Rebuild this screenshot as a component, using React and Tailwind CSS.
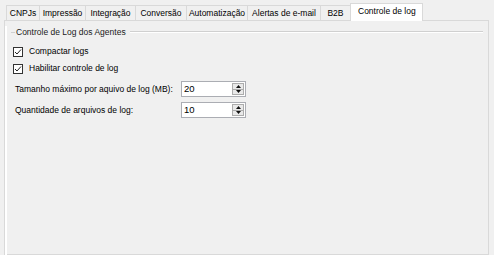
import { useState } from "react";

const tabs = [
  { label: "CNPJs", w: 34 },
  { label: "Impressão", w: 47 },
  { label: "Integração", w: 51 },
  { label: "Conversão", w: 52 },
  { label: "Automatização", w: 62 },
  { label: "Alertas de e-mail", w: 74 },
  { label: "B2B", w: 31 },
  { label: "Controle de log", w: 71 },
];

function CheckBox({ checked, label }) {
  return (
    <div className="flex items-center h-[17px]">
      <span className="w-[10px] h-[10px] border border-[#333333] bg-white flex items-center justify-center">
        {checked && (
          <svg width="8" height="8" viewBox="0 0 8 8">
            <path d="M1 4 L3 6 L7 1.5" fill="none" stroke="#222" strokeWidth="1" />
          </svg>
        )}
      </span>
      <span className="ml-[6px]">{label}</span>
    </div>
  );
}

function NumericUpDown({ value }) {
  return (
    <div className="w-[65px] h-[16px] border border-[#abadb3] bg-white flex">
      <span className="flex-1 pl-[2px] leading-[14px] text-[9.5px]">{value}</span>
      <div className="w-[12px] flex flex-col my-[1px] mr-[1px]">
        <span className="flex-1 border border-[#acacac] bg-[#e9e9e9] flex items-center justify-center">
          <svg width="5" height="3" viewBox="0 0 5 3"><path d="M2.5 0 L5 3 L0 3 Z" fill="#111" /></svg>
        </span>
        <span className="flex-1 border border-t-0 border-[#acacac] bg-[#e9e9e9] flex items-center justify-center">
          <svg width="5" height="3" viewBox="0 0 5 3"><path d="M0 0 L5 0 L2.5 3 Z" fill="#111" /></svg>
        </span>
      </div>
    </div>
  );
}

export default function App() {
  const [active] = useState(7);

  return (
    <div
      className="w-[494px] h-[255px] bg-[#f0f0f0] text-[8.5px] text-black flex flex-col overflow-hidden"
      style={{ fontFamily: '"Liberation Sans", Arial, sans-serif' }}
    >
      <div className="flex items-end h-[20px] pl-[6px] relative z-10">
        {tabs.map((t, i) =>
          i === active ? (
            <div
              key={t.label}
              style={{ width: t.w + 2 }}
              className="h-[18px] -mb-px bg-white border border-b-0 border-[#d9d9d9] pl-[7px] leading-[15px] -ml-px"
            >
              {t.label}
            </div>
          ) : (
            <div
              key={t.label}
              style={{ width: t.w }}
              className={`h-[15px] bg-[#f0f0f0] border border-b-0 border-[#d9d9d9] text-center leading-[14px] ${i > 0 ? "-ml-px" : ""}`}
            >
              {t.label}
            </div>
          )
        )}
      </div>

      <div className="ml-[4px] w-[485px] flex-1 border border-[#d9d9d9] bg-[#f0f0f0]">
        <div className="h-full border-l-2 border-white">
          <div className="ml-[4px] mr-[5px] mt-[5px] flex items-center h-[12px]">
            <span className="w-[4px] h-px bg-[#d0d0d0]" />
            <span className="ml-[1px] text-[#1a1a1a]">Controle de Log dos Agentes</span>
            <span className="flex-1 ml-[4px] h-[2px] border-t border-[#d0d0d0] border-b border-b-white" />
          </div>

          <div className="ml-[6px] mt-[5px]">
            <CheckBox checked label="Compactar logs" />
            <CheckBox checked label="Habilitar controle de log" />
          </div>

          <div className="ml-[8px] mt-[4px] flex flex-col gap-[5px]">
            <div className="flex items-center">
              <span className="w-[166px]">Tamanho máximo por aquivo de log (MB):</span>
              <NumericUpDown value="20" />
            </div>
            <div className="flex items-center">
              <span className="w-[166px]">Quantidade de arquivos de log:</span>
              <NumericUpDown value="10" />
            </div>
          </div>
        </div>
      </div>
    </div>
  );
}
